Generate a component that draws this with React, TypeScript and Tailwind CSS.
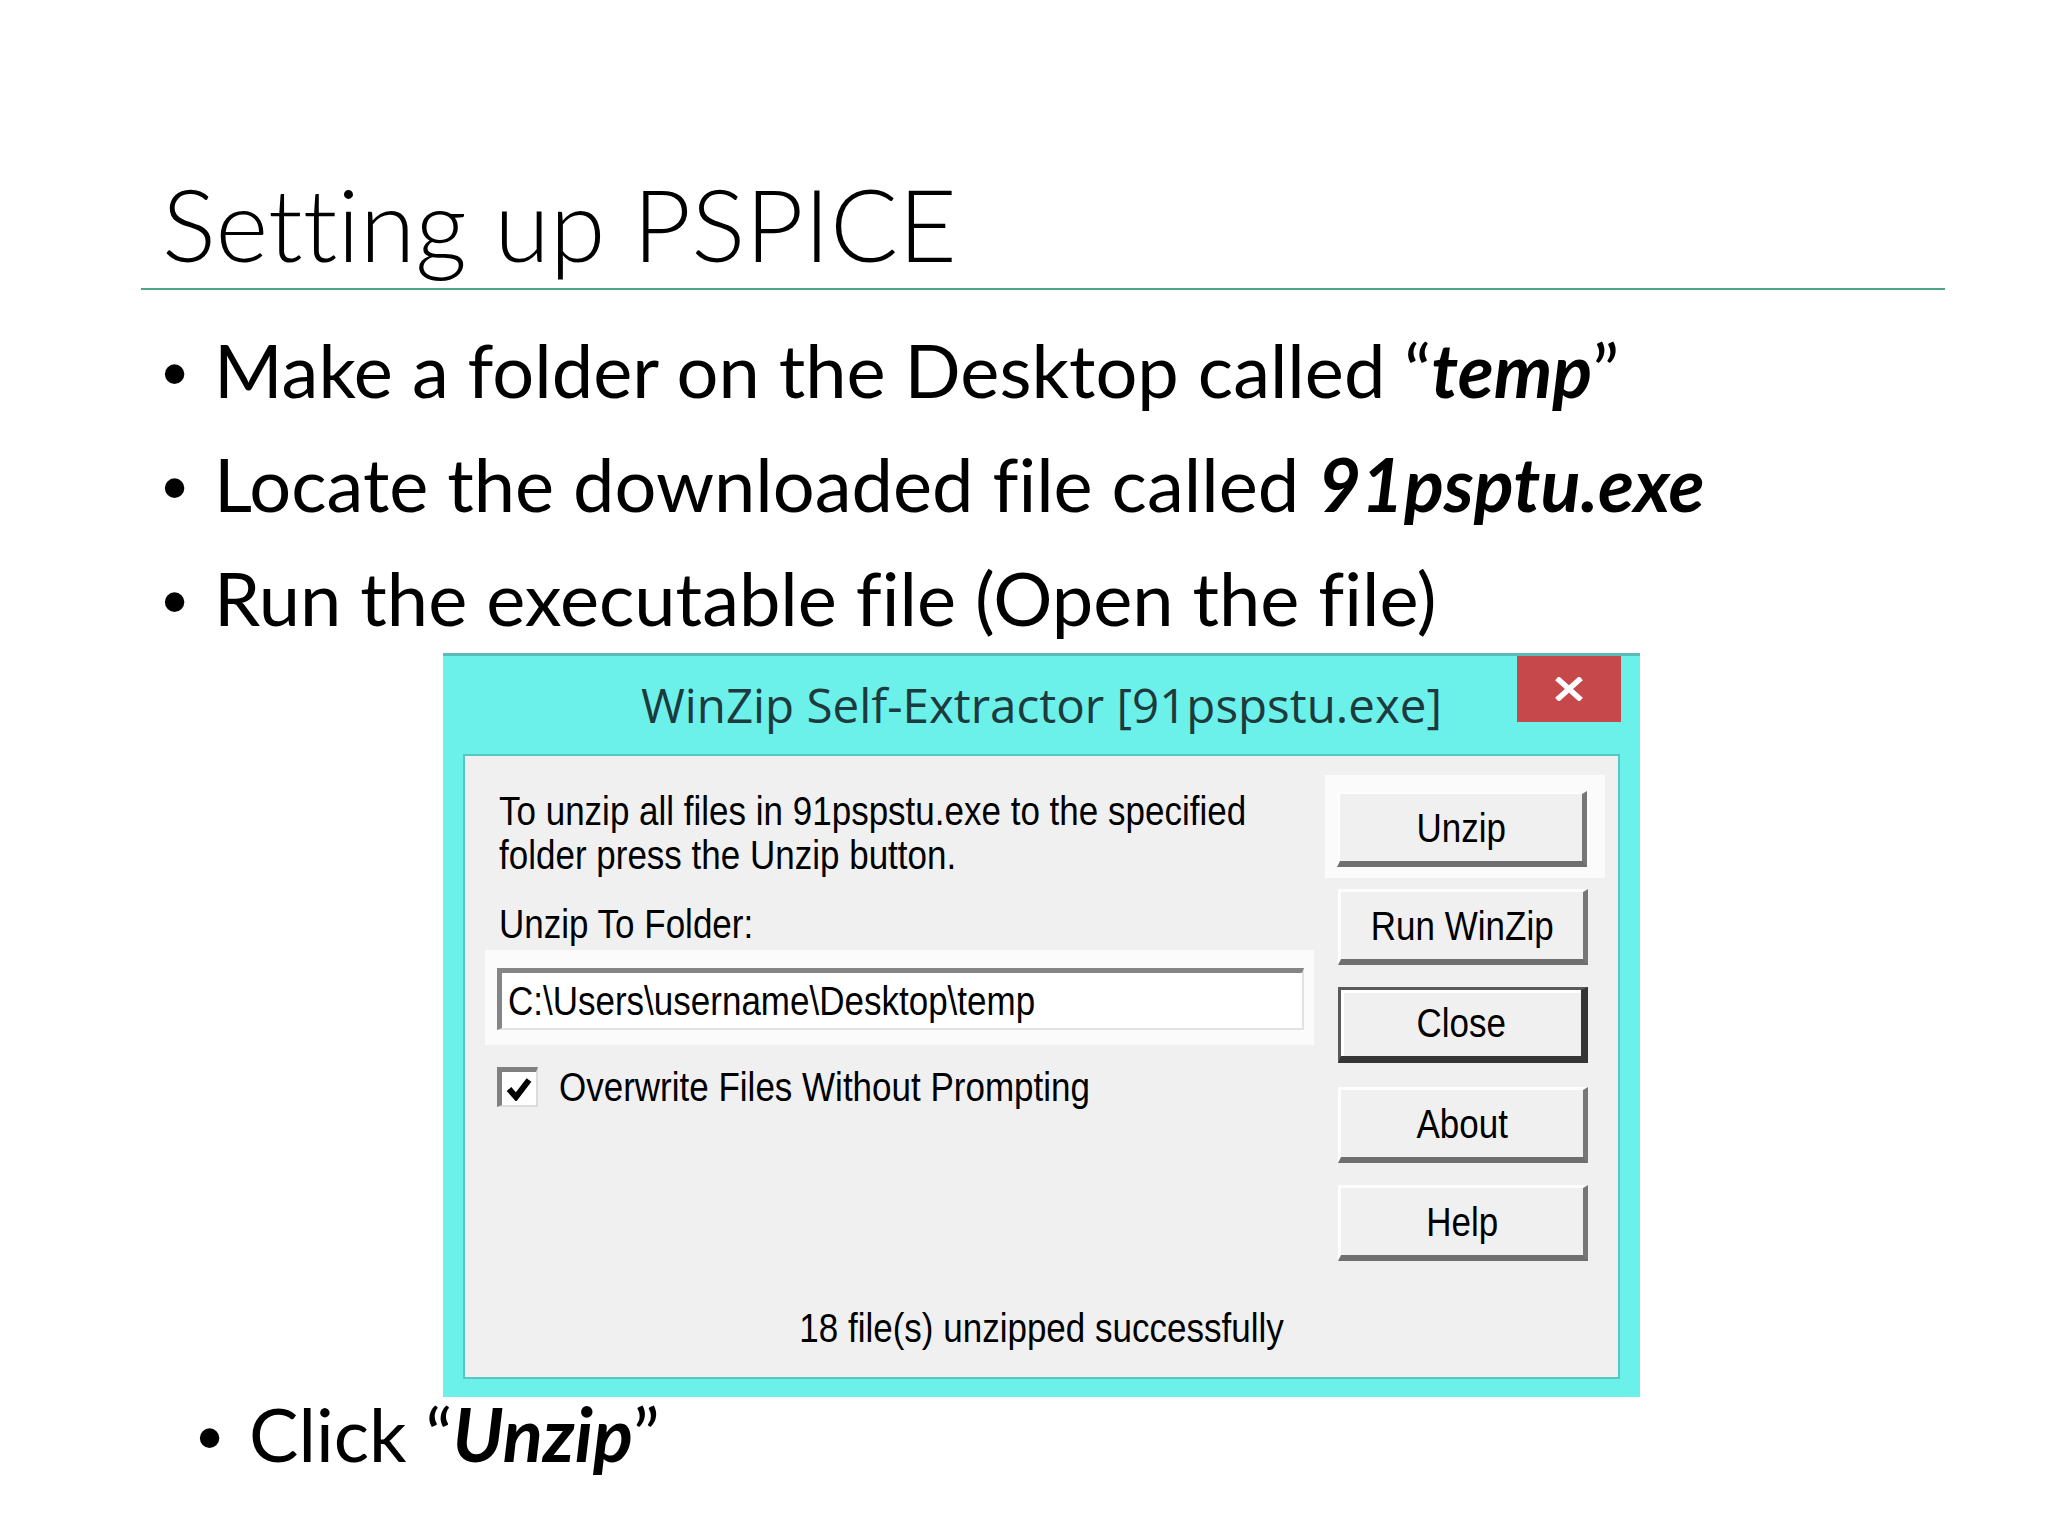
import React from "react";

function L({ children, className = "" }: { children: React.ReactNode; className?: string }) {
  return <div className={"scale-y-[1.15] whitespace-nowrap " + className}>{children}</div>;
}

function Btn({ label, def = false }: { label: string; def?: boolean }) {
  const cls = def
    ? "w-[250px] h-[76px] bg-[#f0f0f0] border-t-[3px] border-l-[3px] border-r-[7px] border-b-[7px] border-t-[#5a5a5a] border-l-[#5a5a5a] border-r-[#353535] border-b-[#353535] shadow-[inset_3px_3px_0_#ffffff] flex items-center justify-center"
    : "w-[250px] h-[76px] bg-[#f0f0f0] border-t-[3px] border-l-[3px] border-r-[5px] border-b-[6px] border-t-[#fdfdfd] border-l-[#fdfdfd] border-r-[#777777] border-b-[#6f6f6f] flex items-center justify-center";
  return (
    <div className={cls}>
      <L>{label}</L>
    </div>
  );
}

function Bullet({ w }: { w: string }) {
  return (
    <span className={"font-['Liberation_Sans',Arial,sans-serif] text-[72px] leading-none shrink-0 " + w}>•</span>
  );
}

export default function App() {
  return (
    <div className="w-[2048px] h-[1536px] bg-white overflow-hidden text-black font-['Lato','Noto_Sans',sans-serif] [font-variant-ligatures:none]">
      <h1 className="pl-[162px] pt-[172px] text-[101px] leading-[102px] font-light whitespace-nowrap">
        Setting up PSPICE
      </h1>
      <div className="ml-[141px] w-[1804px] mt-[14px] h-[2px] bg-[#4ea58a]" />
      <ul className="pt-[23px] text-[74px] leading-[114px]">
        <li className="h-[114px] flex items-baseline pl-[162px] whitespace-nowrap">
          <Bullet w="w-[52px]" />
          <span>
            Make a folder on the Desktop called “<span className="font-bold italic">temp</span>”
          </span>
        </li>
        <li className="h-[114px] flex items-baseline pl-[162px] whitespace-nowrap">
          <Bullet w="w-[52px]" />
          <span>
            Locate the downloaded file called <span className="font-bold italic">91psptu.exe</span>
          </span>
        </li>
        <li className="h-[114px] flex items-baseline pl-[162px] whitespace-nowrap">
          <Bullet w="w-[52px]" />
          <span>Run the executable file (Open the file)</span>
        </li>
      </ul>

      {/* Dialog */}
      <div className="ml-[443px] -mt-[2px] w-[1197px] h-[744px] bg-[#6bf0ea] border-t-[3px] border-t-[#5bbdbb] flex flex-col">
        <div className="h-[98px] grid grid-cols-[1fr_auto_1fr]">
          <div />
          <div className="self-center font-['Open_Sans',sans-serif] text-[47.5px] leading-none text-[#1d3a3c] whitespace-nowrap">
            WinZip Self-Extractor [91pspstu.exe]
          </div>
          <div className="flex justify-end items-start pr-[19px]">
            <div className="w-[104px] h-[66px] bg-[#c7484b] flex items-center justify-center">
              <svg width="30" height="24" viewBox="0 0 30 24">
                <path d="M5 3 L25 21 M25 3 L5 21" stroke="#ffffff" strokeWidth="5.5" strokeLinecap="square" fill="none" />
              </svg>
            </div>
          </div>
        </div>

        <div className="mx-[20px] h-[625px] border-2 border-[#55c8c5] bg-[#f0f0f0] flex flex-col font-['Liberation_Sans',Arial,sans-serif] text-[35px] leading-[44px] text-black">
          <div className="flex pl-[20px] pr-[13px]">
            <div className="w-[830px] pt-[33px]">
              <L className="ml-[14px]">To unzip all files in 91pspstu.exe to the specified</L>
              <L className="ml-[14px]">folder press the Unzip button.</L>
              <L className="ml-[14px] mt-[25px]">Unzip To Folder:</L>
              <div className="mt-[4px] bg-[#fbfbfb] pt-[18px] pb-[15px] pl-[12px] pr-[10px]">
                <div className="h-[62px] bg-white border-t-[5px] border-l-[5px] border-t-[#858585] border-l-[#858585] border-r-[2px] border-b-[2px] border-r-[#e2e2e2] border-b-[#e2e2e2] flex items-center pl-[6px]">
                  <L>C:\Users\username\Desktop\temp</L>
                </div>
              </div>
              <div className="mt-[20px] flex items-center pl-[12px]">
                <div className="w-[41px] h-[40px] bg-white border-t-[5px] border-l-[5px] border-t-[#808080] border-l-[#808080] border-r-[2px] border-b-[2px] border-r-[#dcdcdc] border-b-[#dcdcdc] flex items-center justify-center">
                  <svg width="26" height="24" viewBox="0 0 26 24">
                    <path d="M3 12 L10 20 L23 3" stroke="#000000" strokeWidth="6" fill="none" strokeLinejoin="miter" />
                  </svg>
                </div>
                <L className="ml-[21px]">Overwrite Files Without Prompting</L>
              </div>
            </div>
            <div className="ml-[11px] w-[280px] pt-[19px] flex flex-col">
              <div className="bg-[#fbfbfb] pt-[16px] pb-[11px] pl-[12px]">
                <Btn label="Unzip" />
              </div>
              <div className="ml-[13px] mt-[11px]">
                <Btn label="Run WinZip" />
              </div>
              <div className="ml-[13px] mt-[22px]">
                <Btn label="Close" def />
              </div>
              <div className="ml-[13px] mt-[24px]">
                <Btn label="About" />
              </div>
              <div className="ml-[13px] mt-[22px]">
                <Btn label="Help" />
              </div>
            </div>
          </div>
          <div className="mt-auto pb-[27px] flex justify-center">
            <L>18 file(s) unzipped successfully</L>
          </div>
        </div>
      </div>

      <ul className="mt-[2px] text-[74px] leading-[70px]">
        <li className="flex items-baseline pl-[197px] whitespace-nowrap">
          <Bullet w="w-[52px]" />
          <span>
            Click “<span className="font-bold italic">Unzip</span>”
          </span>
        </li>
      </ul>
    </div>
  );
}
